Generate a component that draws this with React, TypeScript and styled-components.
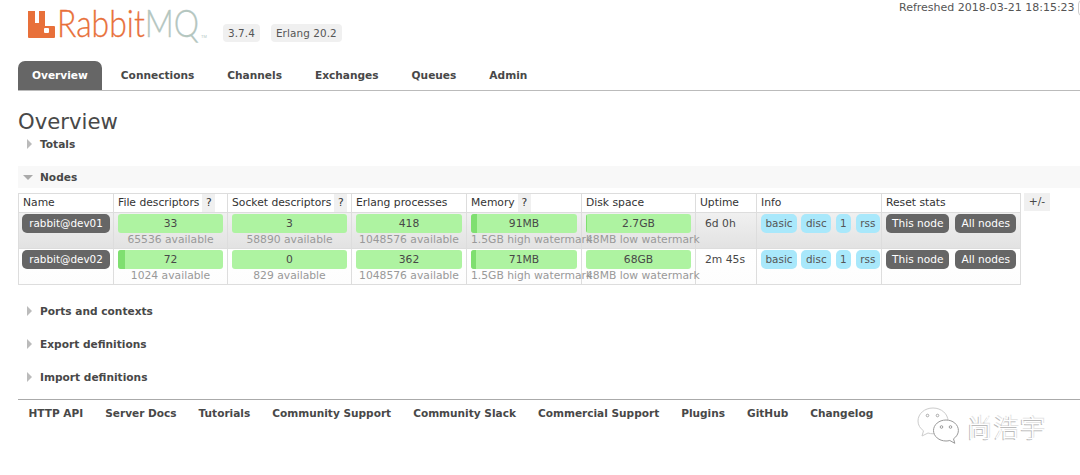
import React from 'react';
import styled, { createGlobalStyle } from 'styled-components';

const GlobalStyle = createGlobalStyle`
  html, body {
    margin: 0;
    padding: 0;
    background: #fff;
    overflow: hidden;
  }
  body {
    font-family: 'DejaVu Sans', Verdana, sans-serif;
    font-size: 10.75px;
    color: #484848;
  }
`;

const Page = styled.div`
  position: relative;
  width: 1080px;
  height: 475px;
  overflow: hidden;
`;

const Header = styled.header`
  display: flex;
  align-items: flex-start;
  height: 61px;
  padding-left: 28px;
  box-sizing: border-box;
`;

const Logo = styled.div`
  display: flex;
  align-items: flex-start;
  width: 195px;
  padding-top: 11px;
`;

const LogoWord = styled.span`
  display: inline-block;
  width: 170px;
  margin: -5px 0 0 2px;
  font-family: Lato, 'Open Sans', sans-serif;
  font-weight: 300;
  font-size: 38px;
  line-height: 32px;
  white-space: nowrap;
  color: #e8703a;
  -webkit-text-stroke: 0.3px currentColor;
  transform: scaleX(0.84);
  transform-origin: left center;
`;

const LogoMq = styled.span`
  color: #b4c6bf;
`;

const LogoTm = styled.span`
  position: absolute;
  left: 201px;
  top: 34px;
  font-family: 'Liberation Sans', sans-serif;
  font-size: 4px;
  line-height: 5px;
  color: #b4c6bf;
`;

const Versions = styled.div`
  display: flex;
  gap: 11px;
  padding-top: 24px;
`;

const VersionBadge = styled.span`
  padding: 0 5px;
  height: 18px;
  line-height: 18px;
  font-size: 10.4px;
  letter-spacing: 0.1px;
  color: #555;
  background: #f0f0f0;
  border-radius: 4px;
`;

const Refreshed = styled.div`
  position: absolute;
  top: 1px;
  left: 899px;
  font-size: 11px;
  line-height: 13px;
  white-space: nowrap;
  color: #555;
`;

const RefreshSelect = styled.span`
  position: absolute;
  top: 0;
  left: 1078px;
  width: 20px;
  height: 14px;
  border: 1px solid #ccc;
  border-radius: 4px;
`;

const Nav = styled.nav`
  display: flex;
  height: 30px;
  margin: 0 0 0 18px;
  box-sizing: border-box;
  border-bottom: 1px solid #bbb;
`;

const Tab = styled.a<{ $active?: boolean }>`
  display: block;
  height: 29px;
  line-height: 29px;
  padding: 0 ${(p) => (p.$active ? '14px' : '16.5px')};
  margin-right: ${(p) => (p.$active ? '2.5px' : '0')};
  font-weight: 700;
  font-size: 10.6px;
  color: ${(p) => (p.$active ? '#fff' : '#484848')};
  background: ${(p) => (p.$active ? '#666' : 'transparent')};
  border-radius: 7px 7px 0 0;
`;

const Main = styled.main`
  padding-left: 18px;
`;

const Title = styled.h1`
  margin: 0;
  padding-top: 19px;
  font-weight: 400;
  font-size: 21.2px;
  line-height: 23px;
  color: #484848;
`;

const SectionRow = styled.div<{ $open?: boolean; $mb?: number }>`
  display: flex;
  align-items: center;
  height: 22px;
  margin-bottom: ${(p) => p.$mb ?? 0}px;
  padding-left: ${(p) => (p.$open ? '5px' : '9px')};
  font-weight: 700;
  font-size: 10.6px;
  background: ${(p) => (p.$open ? '#f8f8f8' : 'transparent')};
`;

const ArrowRight = styled.i`
  width: 0;
  height: 0;
  border-left: 5px solid #bbb;
  border-top: 5px solid transparent;
  border-bottom: 5px solid transparent;
  margin-right: 8px;
`;

const ArrowDown = styled.i`
  width: 0;
  height: 0;
  border-top: 5px solid #aaa;
  border-left: 5px solid transparent;
  border-right: 5px solid transparent;
  margin-right: 7px;
`;

const TableWrap = styled.div`
  display: flex;
  align-items: flex-start;
  gap: 3px;
  margin: 5px 0 15px;
`;

const Table = styled.table`
  table-layout: fixed;
  width: 1002px;
  border-collapse: collapse;
  border: 1px solid #ddd;
  font-size: 10.75px;
`;

const HeadCell = styled.th`
  height: 18px;
  padding: 0 0 0 4px;
  box-sizing: border-box;
  font-weight: 400;
  line-height: 18px;
  text-align: left;
  vertical-align: top;
  white-space: nowrap;
  color: #333;
  border: 1px solid #ddd;
  background: #fff;
`;

const Help = styled.span`
  display: inline-block;
  width: 13px;
  height: 18px;
  line-height: 18px;
  margin-left: 3px;
  text-align: center;
  vertical-align: top;
  background: #f0f0f0;
`;

const Row = styled.tr<{ $shaded?: boolean }>`
  background: ${(p) =>
    p.$shaded ? 'linear-gradient(#f0f0f0, #e2e2e2)' : 'linear-gradient(#fff, #fdfdfd)'};
`;

const Cell = styled.td`
  height: 36px;
  padding: 1px 4px 0;
  box-sizing: border-box;
  vertical-align: top;
  border: 1px solid #ddd;
  white-space: nowrap;
`;

const DarkPill = styled.span`
  display: inline-block;
  height: 19px;
  line-height: 19px;
  padding: 0 6px;
  margin-right: 6px;
  font-size: 10.6px;
  color: #fff;
  background: #666;
  border-radius: 5px;
`;

const NodeName = styled(DarkPill)`
  width: 88px;
  margin: 0 0 0 -1px;
  padding: 0;
  font-size: 10.4px;
  text-align: center;
`;

const Bar = styled.div`
  position: relative;
  height: 19px;
  line-height: 19px;
  text-align: center;
  color: #484848;
  background: #aef3a1;
  border-radius: 3px;
  overflow: hidden;
`;

const BarFill = styled.span`
  position: absolute;
  left: 0;
  top: 0;
  bottom: 0;
  background: #7fdf70;
`;

const BarLabel = styled.span`
  position: relative;
`;

const Sub = styled.div`
  height: 15px;
  line-height: 13px;
  text-align: center;
  color: #999;
`;

const Watermarks = styled(Sub)`
  text-align: left;
`;

const UptimeText = styled.div`
  padding-left: 5px;
  line-height: 19px;
  color: #484848;
`;

const BlueTag = styled.span`
  display: inline-block;
  height: 19px;
  line-height: 19px;
  padding: 0 4.5px;
  margin-right: 4.5px;
  font-size: 10.4px;
  color: #555;
  background: #a9e8fb;
  border-radius: 5px;
`;

const ToggleColumns = styled.div`
  width: 26px;
  height: 18px;
  line-height: 18px;
  text-align: center;
  color: #484848;
  background: #f0f0f0;
`;

const Footer = styled.footer`
  display: flex;
  gap: 22px;
  margin: 11px 0 0 18px;
  padding: 7px 0 0 10.500px;
  border-top: 1px solid #aaa;
  font-weight: 700;
  font-size: 10.55px;
  line-height: 13px;
  color: #484848;
  white-space: nowrap;
`;

const Watermark = styled.div`
  position: absolute;
  left: 917px;
  top: 407px;
  display: flex;
  align-items: center;
  gap: 6px;
`;

const WatermarkText = styled.span`
  font-family: 'Noto Sans CJK SC', sans-serif;
  font-weight: 300;
  font-size: 25px;
  letter-spacing: 1.5px;
  line-height: 34px;
  color: #fff;
  text-shadow: -1px 1px 0 #bbb, 1px -1px 0 #e4e4e4;
`;

const BunnyMark = () => (
  <svg width="27" height="27" viewBox="0 0 27 27" style={{ flex: 'none' }}>
    <path
      fill="#e8703a"
      fillRule="evenodd"
      d="M0 0h7v12h4V0h6v15h9a1 1 0 0 1 1 1v10a1 1 0 0 1-1 1H1a1 1 0 0 1-1-1z M17 17a1 1 0 0 0-1 1v3a1 1 0 0 0 1 1h3a1 1 0 0 0 1-1v-3a1 1 0 0 0-1-1z"
    />
  </svg>
);

const ChatMark = () => (
  <svg width="44" height="38" viewBox="0 0 44 38" style={{ flex: 'none' }}>
    <path
      fill="#fff"
      stroke="#ccc"
      d="M16 1C7.500 1 1 6.800 1 14c0 4 2 7.200 5.500 9.800L5 29l6-3c1.700.5 3.200.8 5 .8 8.500 0 15-5.800 15-12.800S24.500 1 16 1z"
    />
    <path
      fill="#fff"
      stroke="#999"
      d="M29 13c-7 0-12.500 4.700-12.500 10.500S22 34 29 34c1.300 0 2.600-.2 3.800-.5l5 2.800-1.300-4.500c3-2 4.900-5 4.900-8.300C41.400 17.700 36 13 29 13z"
    />
    <circle cx="10.500" cy="8.500" r="1.300" fill="none" stroke="#aaa" />
    <circle cx="20.500" cy="8.500" r="1.300" fill="none" stroke="#aaa" />
    <circle cx="24.500" cy="20" r="1.300" fill="none" stroke="#999" />
    <circle cx="33.500" cy="20" r="1.300" fill="none" stroke="#999" />
  </svg>
);

const tabs = ['Connections', 'Channels', 'Exchanges', 'Queues', 'Admin'];
const footerLinks = [
  'HTTP API',
  'Server Docs',
  'Tutorials',
  'Community Support',
  'Community Slack',
  'Commercial Support',
  'Plugins',
  'GitHub',
  'Changelog',
];

const nodes = [
  {
    name: 'rabbit@dev01',
    shaded: true,
    uptime: '6d 0h',
    file: ['33', '65536 available', 0],
    socket: ['3', '58890 available', 0],
    proc: ['418', '1048576 available', 0],
    mem: ['91MB', 6],
    disk: ['2.7GB', 1],
  },
  {
    name: 'rabbit@dev02',
    shaded: false,
    uptime: '2m 45s',
    file: ['72', '1024 available', 7],
    socket: ['0', '829 available', 0],
    proc: ['362', '1048576 available', 0],
    mem: ['71MB', 5],
    disk: ['68GB', 0],
  },
] as const;

const columns = [95, 114, 124, 115, 115, 114, 61, 125, 139];

const Meter = ({ value, fill }: { value: string; fill: number }) => (
  <Bar>
    {fill > 0 && <BarFill style={{ width: fill }} />}
    <BarLabel>{value}</BarLabel>
  </Bar>
);

const App: React.FC = () => (
  <Page>
    <GlobalStyle />
    <Header>
      <Logo>
        <BunnyMark />
        <LogoWord>
          Rabbit<LogoMq>MQ</LogoMq>
        </LogoWord>
        <LogoTm>TM</LogoTm>
      </Logo>
      <Versions>
        <VersionBadge>3.7.4</VersionBadge>
        <VersionBadge>Erlang 20.2</VersionBadge>
      </Versions>
    </Header>
    <Refreshed>Refreshed 2018-03-21 18:15:23</Refreshed>
    <RefreshSelect />

    <Nav>
      <Tab $active>Overview</Tab>
      {tabs.map((t) => (
        <Tab key={t}>{t}</Tab>
      ))}
    </Nav>

    <Main>
      <Title>Overview</Title>
      <SectionRow $mb={11}>
        <ArrowRight />
        Totals
      </SectionRow>
      <SectionRow $open>
        <ArrowDown />
        Nodes
      </SectionRow>

      <TableWrap>
        <Table>
          <colgroup>
            {columns.map((w, i) => (
              <col key={i} style={{ width: w }} />
            ))}
          </colgroup>
          <thead>
            <tr>
              <HeadCell>Name</HeadCell>
              <HeadCell>
                File descriptors<Help>?</Help>
              </HeadCell>
              <HeadCell>
                Socket descriptors<Help>?</Help>
              </HeadCell>
              <HeadCell>Erlang processes</HeadCell>
              <HeadCell>
                Memory<Help>?</Help>
              </HeadCell>
              <HeadCell>Disk space</HeadCell>
              <HeadCell>Uptime</HeadCell>
              <HeadCell>Info</HeadCell>
              <HeadCell>Reset stats</HeadCell>
            </tr>
          </thead>
          <tbody>
            {nodes.map((n) => (
              <Row key={n.name} $shaded={n.shaded}>
                <Cell>
                  <NodeName>{n.name}</NodeName>
                </Cell>
                <Cell>
                  <Meter value={n.file[0]} fill={n.file[2]} />
                  <Sub>{n.file[1]}</Sub>
                </Cell>
                <Cell>
                  <Meter value={n.socket[0]} fill={n.socket[2]} />
                  <Sub>{n.socket[1]}</Sub>
                </Cell>
                <Cell>
                  <Meter value={n.proc[0]} fill={n.proc[2]} />
                  <Sub>{n.proc[1]}</Sub>
                </Cell>
                <Cell>
                  <Meter value={n.mem[0]} fill={n.mem[1]} />
                  <Watermarks>1.5GB high watermark</Watermarks>
                </Cell>
                <Cell>
                  <Meter value={n.disk[0]} fill={n.disk[1]} />
                  <Watermarks>48MB low watermark</Watermarks>
                </Cell>
                <Cell>
                  <UptimeText>{n.uptime}</UptimeText>
                </Cell>
                <Cell>
                  <BlueTag>basic</BlueTag>
                  <BlueTag>disc</BlueTag>
                  <BlueTag>1</BlueTag>
                  <BlueTag>rss</BlueTag>
                </Cell>
                <Cell>
                  <DarkPill>This node</DarkPill>
                  <DarkPill>All nodes</DarkPill>
                </Cell>
              </Row>
            ))}
          </tbody>
        </Table>
        <ToggleColumns>+/-</ToggleColumns>
      </TableWrap>

      {['Ports and contexts', 'Export definitions', 'Import definitions'].map((s, i) => (
        <SectionRow key={s} $mb={i < 2 ? 11 : 0}>
          <ArrowRight />
          {s}
        </SectionRow>
      ))}
    </Main>

    <Footer>
      {footerLinks.map((l) => (
        <span key={l}>{l}</span>
      ))}
    </Footer>

    <Watermark>
      <ChatMark />
      <WatermarkText>尚浩宇</WatermarkText>
    </Watermark>
  </Page>
);

export default App;
